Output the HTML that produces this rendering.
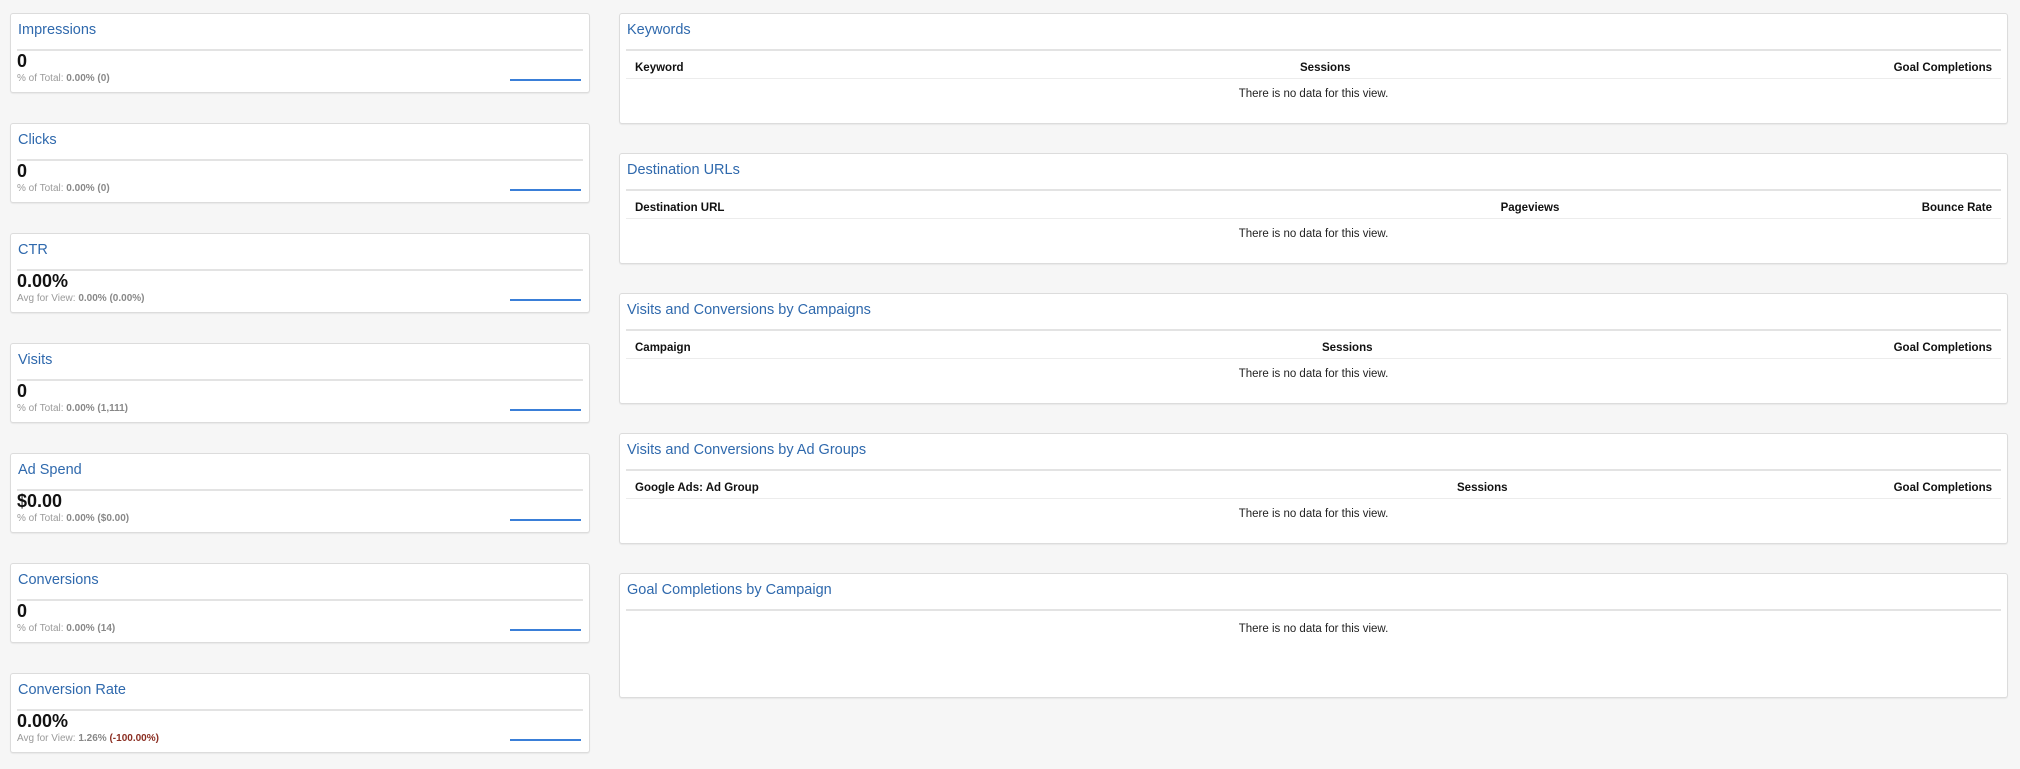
<!DOCTYPE html>
<html><head><meta charset="utf-8"><style>
*{margin:0;padding:0;box-sizing:border-box}
body{width:2020px;height:769px;background:#f6f6f6;font-family:"Liberation Sans",Arial,sans-serif;position:relative;overflow:hidden}
.c{position:absolute;background:#fff;border:1px solid #dcdcdc;border-radius:3px;box-shadow:0 1px 1px rgba(0,0,0,.06)}
.t{position:absolute;left:7px;top:8px;color:#2f69ad;font-size:14.5px}
.sep{position:absolute;left:6px;right:6px;top:35px;height:2px;background:#e3e3e3}
.v{position:absolute;left:6px;top:37px;font-size:18px;font-weight:bold;color:#111}
.s{position:absolute;left:6px;top:59px;font-size:10px;color:#9a9a9a}
.s b{color:#888}
.s i{font-style:normal;font-weight:bold;color:#8b2e22}
.bl{position:absolute;right:8px;top:65px;width:71px;height:2px;background:#3a7fd8}
.h{position:absolute;top:48px;font-size:11.5px;font-weight:bold;color:#111}
.hl{position:absolute;left:6px;right:6px;top:64px;height:1px;background:#ececec}
.nd{position:absolute;left:0;right:0;top:74px;text-align:center;font-size:11.5px;color:#222}
</style></head><body>
<div class="c" style="left:10px;top:13px;width:580px;height:80px"><div class="t">Impressions</div><div class="sep"></div><div class="v">0</div><div class="s">% of Total: <b>0.00% (0)</b></div><div class="bl"></div></div>
<div class="c" style="left:10px;top:123px;width:580px;height:80px"><div class="t">Clicks</div><div class="sep"></div><div class="v">0</div><div class="s">% of Total: <b>0.00% (0)</b></div><div class="bl"></div></div>
<div class="c" style="left:10px;top:233px;width:580px;height:80px"><div class="t">CTR</div><div class="sep"></div><div class="v">0.00%</div><div class="s">Avg for View: <b>0.00% (0.00%)</b></div><div class="bl"></div></div>
<div class="c" style="left:10px;top:343px;width:580px;height:80px"><div class="t">Visits</div><div class="sep"></div><div class="v">0</div><div class="s">% of Total: <b>0.00% (1,111)</b></div><div class="bl"></div></div>
<div class="c" style="left:10px;top:453px;width:580px;height:80px"><div class="t">Ad Spend</div><div class="sep"></div><div class="v">$0.00</div><div class="s">% of Total: <b>0.00% ($0.00)</b></div><div class="bl"></div></div>
<div class="c" style="left:10px;top:563px;width:580px;height:80px"><div class="t">Conversions</div><div class="sep"></div><div class="v">0</div><div class="s">% of Total: <b>0.00% (14)</b></div><div class="bl"></div></div>
<div class="c" style="left:10px;top:673px;width:580px;height:80px"><div class="t">Conversion Rate</div><div class="sep"></div><div class="v">0.00%</div><div class="s">Avg for View: <b>1.26%</b> <i>(-100.00%)</i></div><div class="bl"></div></div>

<div class="c" style="left:619px;top:13px;width:1389px;height:111px"><div class="t">Keywords</div><div class="sep"></div>
<div class="h" style="left:15px">Keyword</div><div class="h" style="left:680px;width:50px;text-align:center">Sessions</div><div class="h" style="right:15px">Goal Completions</div><div class="hl"></div><div class="nd">There is no data for this view.</div></div>
<div class="c" style="left:619px;top:153px;width:1389px;height:111px"><div class="t">Destination URLs</div><div class="sep"></div>
<div class="h" style="left:15px">Destination URL</div><div class="h" style="left:880px;width:60px;text-align:center">Pageviews</div><div class="h" style="right:15px">Bounce Rate</div><div class="hl"></div><div class="nd">There is no data for this view.</div></div>
<div class="c" style="left:619px;top:293px;width:1389px;height:111px"><div class="t">Visits and Conversions by Campaigns</div><div class="sep"></div>
<div class="h" style="left:15px">Campaign</div><div class="h" style="left:702px;width:50px;text-align:center">Sessions</div><div class="h" style="right:15px">Goal Completions</div><div class="hl"></div><div class="nd">There is no data for this view.</div></div>
<div class="c" style="left:619px;top:433px;width:1389px;height:111px"><div class="t">Visits and Conversions by Ad Groups</div><div class="sep"></div>
<div class="h" style="left:15px">Google Ads: Ad Group</div><div class="h" style="left:837px;width:50px;text-align:center">Sessions</div><div class="h" style="right:15px">Goal Completions</div><div class="hl"></div><div class="nd">There is no data for this view.</div></div>
<div class="c" style="left:619px;top:573px;width:1389px;height:125px"><div class="t">Goal Completions by Campaign</div><div class="sep"></div>
<div class="nd" style="top:49px">There is no data for this view.</div></div>
</body></html>
